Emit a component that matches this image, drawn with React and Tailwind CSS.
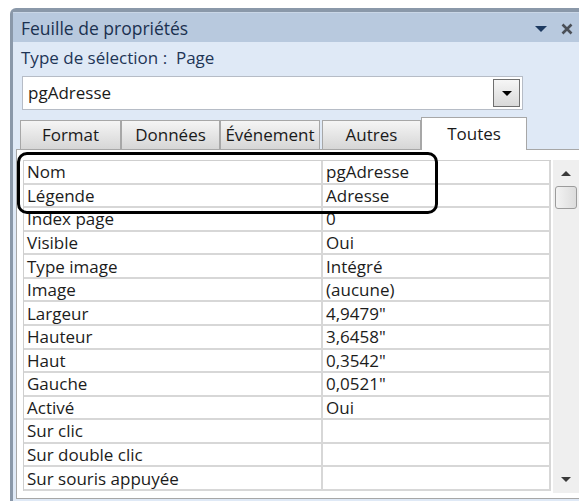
import React from 'react';

const rows = [
  ['Nom', 'pgAdresse'],
  ['Légende', 'Adresse'],
  ['Index page', '0'],
  ['Visible', 'Oui'],
  ['Type image', 'Intégré'],
  ['Image', '(aucune)'],
  ['Largeur', '4,9479"'],
  ['Hauteur', '3,6458"'],
  ['Haut', '0,3542"'],
  ['Gauche', '0,0521"'],
  ['Activé', 'Oui'],
  ['Sur clic', ''],
  ['Sur double clic', ''],
  ['Sur souris appuyée', ''],
];

const tabs = ['Format', 'Données', 'Événement', 'Autres'];

export default function App() {
  return (
    <div
      className="relative w-[579px] h-[501px] overflow-hidden bg-white pt-[8px] pl-[10px]"
      style={{ fontFamily: '"Open Sans", "Noto Sans", sans-serif' }}
    >
      {/* Property sheet pane */}
      <div className="flex flex-col h-full bg-[#dfe9f6] border-l-[3px] border-t-[4px] border-[#8a98a9] rounded-tl-[6px]">
        {/* Title bar */}
        <div className="flex items-center h-[30px] bg-[#b8c9de] border-t border-[#c9d6e6] pl-[8px] pr-[4px]">
          <span className="flex-1 text-[17.5px] text-[#1b3150] leading-none pt-[2px]">Feuille de propriétés</span>
          <svg width="12" height="6" viewBox="0 0 12 6" className="mr-[14px] mt-[3px]">
            <path d="M0 0h12L6 6z" fill="#1d3a60" />
          </svg>
          <svg width="12" height="12" viewBox="0 0 12 12" className="mr-[2px] mt-[2px]">
            <path d="M1.5 1.5l9 9M10.5 1.5l-9 9" stroke="#4a4f57" strokeWidth="2.6" />
          </svg>
        </div>

        {/* Selection type */}
        <div className="h-[31px] flex items-center pl-[8px] text-[17px] text-[#1e3556]">
          Type de sélection :&nbsp;&nbsp;Page
        </div>

        {/* Object combo */}
        <div className="ml-[9px] mt-[3px] w-[501px] h-[34px] bg-white border border-[#b6bcc6] flex items-center pl-[5px] pr-[2px]">
          <span className="flex-1 text-[17px] text-[#1a1a1a]">pgAdresse</span>
          <div className="w-[27px] h-[28px] border border-[#6f6f6f] bg-gradient-to-b from-[#f6f6f6] to-[#d9d9d9] flex items-center justify-center">
            <svg width="10" height="5" viewBox="0 0 10 5">
              <path d="M0 0h10L5 5z" fill="#000" />
            </svg>
          </div>
        </div>

        {/* Tabs */}
        <div className="flex items-end ml-[7px] mt-[7px] h-[32px]">
          {tabs.map((t, i) => (
            <div
              key={t}
              className={`h-[29px] flex items-center justify-center border border-b-0 border-[#a7a7a7] bg-gradient-to-b from-[#f5f5f5] to-[#d6d6d6] text-[17px] text-[#1a1a1a] whitespace-nowrap overflow-hidden ${
                i === 0 ? 'w-[101px]' : i === 1 ? 'w-[99px]' : i === 2 ? 'w-[100px] mr-[2px]' : 'w-[99px]'
              }`}
            >
              {t}
            </div>
          ))}
          <div className="relative z-10 w-[106px] h-[33px] -mb-px bg-white border border-b-0 border-[#a7a7a7] flex justify-center pt-[3px] text-[17px] text-[#1a1a1a]">
            Toutes
          </div>
          <div className="flex-1 h-px" />
        </div>

        {/* Tab page */}
        <div className="ml-[3px] bg-white border-l border-t border-b border-[#a7a7a7] pl-[6px] pt-[10px] pb-[5px]">
          <div className="flex h-[333px]">
            <div className="w-[528px] border-l border-t border-[#cfcfcf] self-start">
              {rows.map(([name, value]) => (
                <div key={name} className="flex h-[23.57px] border-b-2 border-[#d7d7d7] text-[17px] leading-none text-[#1c1c1c]">
                  <div className="w-[299px] pl-[3px] flex items-center border-r-2 border-[#d7d7d7] whitespace-nowrap">{name}</div>
                  <div className="flex-1 pl-[3px] flex items-center border-r-2 border-[#d7d7d7]">{value}</div>
                </div>
              ))}
            </div>
            {/* Vertical scrollbar */}
            <div className="ml-[2px] w-[26px] bg-[#efefef] flex flex-col items-center">
              <svg width="10" height="5" viewBox="0 0 10 5" className="mt-[11px]">
                <path d="M5 0l5 5H0z" fill="#3a3a3a" />
              </svg>
              <div className="mt-[10px] w-[22px] h-[23px] rounded-[3px] border border-[#9c9c9c] bg-gradient-to-r from-[#f3f3f3] to-[#dcdcdc]" />
              <div className="flex-1" />
              <svg width="10" height="5" viewBox="0 0 10 5" className="mb-[11px]">
                <path d="M0 0h10L5 5z" fill="#3a3a3a" />
              </svg>
            </div>
          </div>
        </div>
      </div>

      {/* Callout around Nom / Légende */}
      <div className="absolute left-[17px] top-[152px] w-[421px] h-[62px] border-[3px] border-black rounded-[10px]" />
    </div>
  );
}
